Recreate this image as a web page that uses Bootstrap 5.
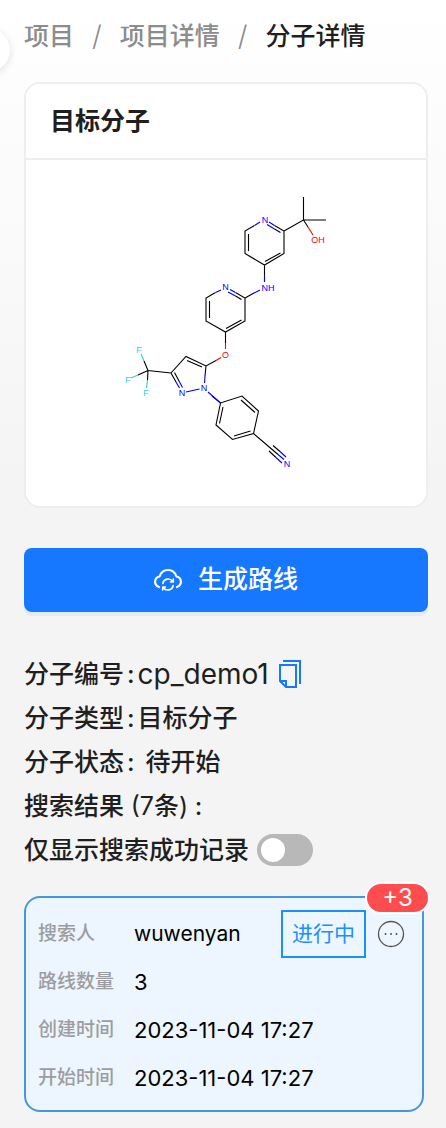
<!DOCTYPE html>
<html lang="zh-CN">
<head>
<meta charset="utf-8">
<meta name="viewport" content="width=device-width, initial-scale=1">
<title>分子详情</title>
<link href="https://cdn.jsdelivr.net/npm/bootstrap@5.3.0/dist/css/bootstrap.min.css" rel="stylesheet">
<style>
  body { font-family: Inter, "Noto Sans CJK SC", sans-serif; font-size: 25px; line-height: 44px; color: #1f1f1f; background: #f4f4f4 linear-gradient(#fff, #f4f4f4) no-repeat 0 0 / 100% 500px; }
  .page-body { padding: 14px 18px 16px 24px; }
  .crumbs { gap: 18px; margin-bottom: 24px; font-size: 25px; font-weight: 500; }
  .crumbs a, .crumbs .slash { color: #8c8c8c; text-decoration: none; }
  .crumbs .slash { font-size: 28px; font-weight: 300; }
  .side-toggle { left: -34px; top: 28px; width: 44px; height: 44px; background: #fff; border: 0; box-shadow: 0 2px 8px rgba(0,0,0,.12); }
  .target-card { border: 2px solid #eee; border-radius: 16px; margin-bottom: 40px; }
  .target-card .card-header { background: #fff; border-bottom: 2px solid #eee; border-radius: 14px 14px 0 0; padding: 15px 24px; }
  .target-card h1 { font-size: 25px; line-height: 44px; font-weight: 700; }
  .btn-route { --bs-btn-bg: #1677ff; --bs-btn-hover-bg: #4096ff; --bs-btn-border-width: 0; height: 64px; border-radius: 8px; font-size: 25px; font-weight: 500; box-shadow: 0 4px 0 #e2ebf6; gap: 16px; margin-bottom: 40px; }
  .field-key { font-weight: 500; }
  .mol-id { font-size: 28px; }
  .colon { padding: 0 3px; font-weight: 500; }
  .tally { font-weight: 400; }
  .form-switch .only-ok { flex: none; width: 56px; height: 32px; margin: 0 0 0 8px; border: 0; background-color: #b8b8b8; background-size: 32px 32px; --bs-form-switch-bg: url("data:image/svg+xml,%3csvg xmlns='http://www.w3.org/2000/svg' viewBox='-4 -4 8 8'%3e%3ccircle r='3' fill='%23fff'/%3e%3c/svg%3e"); }
  .form-switch .only-ok:checked { background-color: #1677ff; }
  .record { background: #edf5fe; border: 2px solid #4398e2; border-radius: 16px; margin: 24px 4px 0 0; padding: 12px 12px 8px; font-size: 21px; line-height: 48px; color: #000; }
  .record dt { width: 96px; flex: none; font-size: 19px; font-weight: 500; color: #9c9da1; }
  .record .figures { font-size: 22px; }
  .state-tag { height: 48px; line-height: 44px; border: 2px solid #1890ff; color: #1890ff; padding: 0 9px; }
  .count-pill { right: -8px; top: -16px; height: 32px; min-width: 65px; line-height: 28px; border: 2px solid #fff; border-radius: 16px; background: #ff4d4f; color: #fff; font-size: 24px; text-align: center; }
  .stamp { font-size: 31px; font-weight: 300; fill: #000; fill-opacity: .02; pointer-events: none; }
  .atoms { font: 9px "Liberation Sans", sans-serif; text-anchor: middle; fill-opacity: 1; }
</style>
</head>
<body>
<div class="position-relative overflow-hidden min-vh-100">
  <button type="button" class="side-toggle position-absolute rounded-circle p-0" aria-label="展开菜单"></button>
  <main class="page-body">
    <nav aria-label="breadcrumb">
      <ol class="breadcrumb crumbs flex-nowrap">
        <li><a href="#">项目</a></li>
        <li class="slash" aria-hidden="true">/</li>
        <li><a href="#">项目详情</a></li>
        <li class="slash" aria-hidden="true">/</li>
        <li aria-current="page">分子详情</li>
      </ol>
    </nav>

    <section class="card target-card">
      <div class="card-header"><h1 class="m-0">目标分子</h1></div>
      <svg class="d-block w-100" viewBox="26 160 400 346" role="img" aria-label="目标分子结构式">
        <g fill="none" stroke="#000" stroke-width="1.1">
          <path d="M274.500 225.500L284 231V253.500L264.500 265L245 253.500V231L254.500 225.500M280.500 253L265 261.500M248.500 251V234M274.500 229L280.500 232.500M284 231L303.500 220V197M303.500 220H326M303.500 220L308 227M264.500 265V275"/>
          <path d="M235.500 292.500L245 298V321L225.500 332L206 321V298L215.500 292.500M241.500 320L226 328.500M209.500 318V301M235.500 296L241.500 299.500M245 298L254 293M225.500 332V343M216 360.500L206 366L186 356.500L171 373L176 382M206 366L205 376M202 367L187 360.500M174.500 372.500L179 381M171 373L148 370.500L144 361M148 370.500L138 375M148 370.500L147.500 380"/>
          <path d="M212 396L220.500 403L242 396L258.500 411L253.500 433.500L232.500 439.500L216 425L220.500 403M223 407L219.500 423.500M241 400L255 412.500M250.500 431L234 436M253.500 433.500L271 448.500L278 454.500M273 445.500L280 451.500M269 451L276 457.500"/>
        </g>
        <g fill="none" stroke="#00f" stroke-width="1.1">
          <path d="M254.500 225.500L260 222M269 222L274.500 225.500M267 224.500L274.500 229M264.500 275V282M215.500 292.500L221 290M230 289.500L235.500 292.500M228 292L235.500 296M254 293L260 290M176 382L179.500 388M179 381L182.500 387.500M205 376L204.500 383M199.500 389L186 392M208 392L220.500 403M278 454.500L284 459.500M280 451.500L286 457M276 457.500L282 463"/>
        </g>
        <path d="M308 227L313 235M225.500 343V349M221 357.500L216 360.500" stroke="#f00" stroke-width="1.1"/>
        <path d="M144 361L141 354M138 375L131 378M147.500 380L146.500 388" stroke="#3cc" stroke-width="1.1"/>
        <g class="atoms">
          <g fill="#00f"><text x="265" y="223">N</text><text x="268" y="291">NH</text><text x="225.500" y="290">N</text><text x="182" y="396">N</text><text x="204" y="391">N</text><text x="287" y="467">N</text></g>
          <g fill="#f00"><text x="318" y="243">OH</text><text x="225.500" y="358">O</text></g>
          <g fill="#3cc"><text x="139" y="353">F</text><text x="128" y="383">F</text><text x="146" y="396">F</text></g>
        </g>
      </svg>
    </section>

    <button type="button" class="btn btn-primary btn-route w-100 d-flex align-items-center justify-content-center">
      <svg width="28" height="24" viewBox="0 0 28 24" fill="none" stroke="#fff" stroke-width="2.200" stroke-linecap="round" stroke-linejoin="round" aria-hidden="true">
        <path d="M5 19C-.5 17 0 9.500 5.500 8.500C8.500 -.2 19.500 -.2 22.500 8.500C28 9.500 28.500 17 23 19"/>
        <path d="M8.800 15.500A5.400 5.400 0 0 1 18.500 13.200M19.300 11V14H16.500M19.200 17.500A5.400 5.400 0 0 1 9.500 19.800M8.700 22V19H11.500" stroke-width="1.600"/>
      </svg>
      <span>生成路线</span>
    </button>

    <div class="d-flex align-items-center"><span class="field-key">分子编号</span><span class="colon">:</span><span class="mol-id">cp_demo1</span>
      <button type="button" class="btn p-0 border-0 d-flex ms-2" aria-label="复制">
        <svg width="26" height="30" viewBox="0 0 26 30" fill="none" stroke="#1677ff" stroke-width="2" aria-hidden="true"><path d="M6 2H23V25M3 6H19V28H9L3 22ZM3 22H9V28"/></svg>
      </button>
    </div>
    <div><span class="field-key">分子类型</span><span class="colon">:</span><span class="field-key">目标分子</span></div>
    <div><span class="field-key">分子状态</span><span class="colon">:</span><span class="field-key ms-2">待开始</span></div>
    <div class="field-key">搜索结果 <span class="tally">(7</span>条<span class="tally">)</span> :</div>
    <div class="form-switch d-flex align-items-center p-0">
      <label class="field-key" for="onlyOk">仅显示搜索成功记录</label>
      <input class="form-check-input only-ok" type="checkbox" role="switch" id="onlyOk">
    </div>

    <section class="record position-relative">
      <span class="count-pill position-absolute">+3</span>
      <dl class="m-0">
        <div class="d-flex">
          <dt>搜索人</dt><dd class="m-0 flex-grow-1">wuwenyan</dd>
          <dd class="m-0 state-tag">进行中</dd>
          <dd class="m-0 d-flex align-items-center">
            <button type="button" class="btn p-0 border-0 d-flex ms-2" aria-label="更多">
              <svg width="36" height="28" viewBox="0 0 36 28" aria-hidden="true"><circle cx="17" cy="14" r="12.500" fill="none" stroke="#555" stroke-width="1.300"/><g fill="#444"><circle cx="11.500" cy="14" r=".9"/><circle cx="17" cy="14" r=".9"/><circle cx="22.500" cy="14" r=".9"/></g></svg>
            </button>
          </dd>
        </div>
        <div class="d-flex"><dt>路线数量</dt><dd class="m-0 figures">3</dd></div>
        <div class="d-flex"><dt>创建时间</dt><dd class="m-0 figures">2023-11-04 17:27</dd></div>
        <div class="d-flex"><dt>开始时间</dt><dd class="m-0 figures">2023-11-04 17:27</dd></div>
      </dl>
    </section>
  </main>
  <!-- user watermark laid over the whole page -->
  <svg class="stamp position-absolute top-0 start-0 w-100 h-100" aria-hidden="true">
    <text transform="translate(4 504) rotate(-29)">st-wuwenyan_23-11-04</text>
    <text transform="translate(4 436) rotate(-29)">_23-11-04</text>
    <text transform="translate(252 284) rotate(-29)">web-test-wuw</text>
    <text transform="translate(268 338) rotate(-29)">17:27:16</text>
    <text transform="translate(422 268) rotate(-29)">w</text>
    <text transform="translate(4 556) rotate(-29)">16</text>
    <text transform="translate(34 46) rotate(-29)">16</text>
    <text transform="translate(212 818) rotate(-29)">web-test-wuwen</text>
    <text transform="translate(236 866) rotate(-29)">17:27:16</text>
    <text transform="translate(384 790) rotate(-29)">web</text>
    <text transform="translate(408 834) rotate(-29)">17</text>
    <text transform="translate(4 1002) rotate(-29)">wuwenyan_23-11-04</text>
    <text transform="translate(4 934) rotate(-29)">23-11-04</text>
  </svg>
</div>
<script src="https://cdn.jsdelivr.net/npm/bootstrap@5.3.0/dist/js/bootstrap.bundle.min.js"></script>
</body>
</html>
